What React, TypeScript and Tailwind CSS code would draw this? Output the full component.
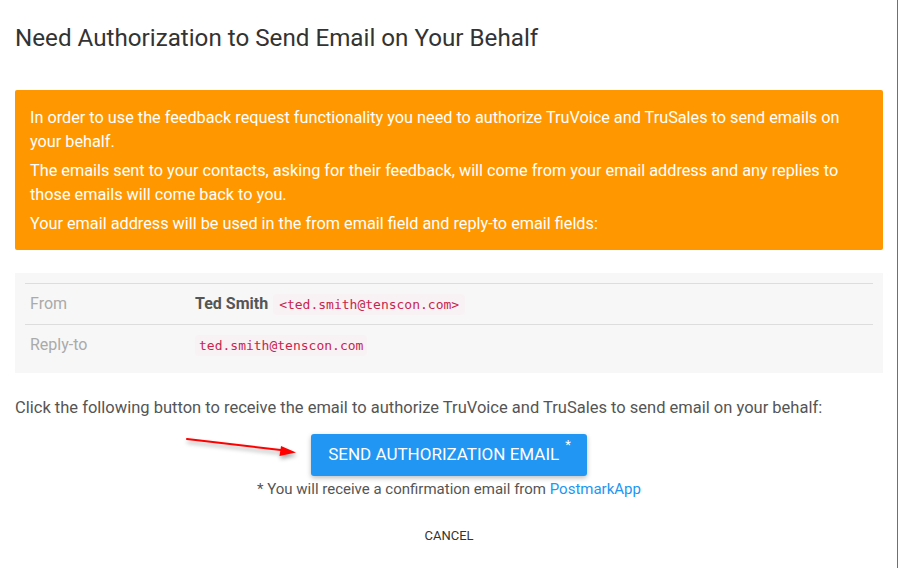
import React from "react";

const FONT = "font-['Roboto',_'Liberation_Sans',_sans-serif]";
const MONO = "font-['DejaVu_Sans_Mono',_'Liberation_Mono',_monospace]";

function Code({ children, className = "" }: { children: React.ReactNode; className?: string }) {
  return (
    <code
      className={`${MONO} rounded-[4px] bg-[#f9f2f4] px-[4px] py-[2px] text-[13px] leading-[17px] text-[#c7254e] ${className}`}
    >
      {children}
    </code>
  );
}

// Red annotation arrow pointing at the send button
function PointerArrow() {
  return (
    <svg
      className="pointer-events-none absolute left-[-126px] top-[2px] drop-shadow-[1px_3px_2px_rgba(0,0,0,0.35)]"
      width="116"
      height="22"
      viewBox="0 0 116 22"
    >
      <line x1="2" y1="3" x2="100" y2="14.5" stroke="#ff0000" strokeWidth="2" strokeLinecap="round" />
      <polygon points="111,16.5 96,10 94.5,20" fill="#ff0000" />
    </svg>
  );
}

export default function App() {
  return (
    <div className={`${FONT} flex h-[568px] w-[899px] overflow-hidden bg-white`}>
      <div className="flex w-[898px] flex-col border-r border-[#707070] pl-[15px] pr-[14px]">
        <h4 className="pt-6 text-[24.2px] leading-7 text-[#333]">
          Need Authorization to Send Email on Your Behalf
        </h4>

        {/* warning panel */}
        <div className="mt-[38px] flex flex-col gap-[5px] rounded-[2px] bg-[#ff9800] px-[15px] pb-[14px] pt-4 text-[16.25px] leading-6 text-white">
          <p>
            In order to use the feedback request functionality you need to authorize TruVoice and TruSales to
            send emails on your behalf.
          </p>
          <p>
            The emails sent to your contacts, asking for their feedback, will come from your email address and any
            replies to those emails will come back to you.
          </p>
          <p>Your email address will be used in the from email field and reply-to email fields:</p>
        </div>

        {/* sender details */}
        <div className="mt-[23px] bg-[#f7f7f7] px-[10px] pb-2 pt-[10px] text-[16px]">
          <div className="grid grid-cols-[165px_1fr] border-t border-[#ddd]">
            <div className="flex h-10 items-center px-[5px] text-[#aaa]">From</div>
            <div className="flex h-10 items-center gap-[5px] px-[5px]">
              <span className="font-bold text-[#555]">Ted Smith</span>
              <Code className="px-[6px]">&lt;ted.smith@tenscon.com&gt;</Code>
            </div>
          </div>
          <div className="grid grid-cols-[165px_1fr] border-t border-[#ddd]">
            <div className="flex h-10 items-center px-[5px] text-[#aaa]">Reply-to</div>
            <div className="flex h-10 items-center px-[5px]">
              <Code>ted.smith@tenscon.com</Code>
            </div>
          </div>
        </div>

        <p className="mt-[23px] text-[16.5px] leading-6 text-[#555]">
          Click the following button to receive the email to authorize TruVoice and TruSales to send email on your
          behalf:
        </p>

        <div className="mt-[14px] flex flex-col items-center">
          <div className="relative">
            <PointerArrow />
            <button className="flex h-[42px] items-center rounded-[3px] bg-[#2196f3] pl-[17px] pr-4 text-[17px] uppercase text-white shadow-[0_2px_5px_rgba(0,0,0,0.26)]">
              Send Authorization Email
              <sup className="ml-[6px] -mt-2 text-[13px]">*</sup>
            </button>
          </div>
          <p className="mt-px text-[15px] leading-6 text-[#555]">
            * You will receive a confirmation email from <a className="text-[#2196f3]">PostmarkApp</a>
          </p>
          <button className="mt-[17px] h-9 px-4 text-[13px] uppercase text-[#333]">Cancel</button>
        </div>
      </div>
    </div>
  );
}
